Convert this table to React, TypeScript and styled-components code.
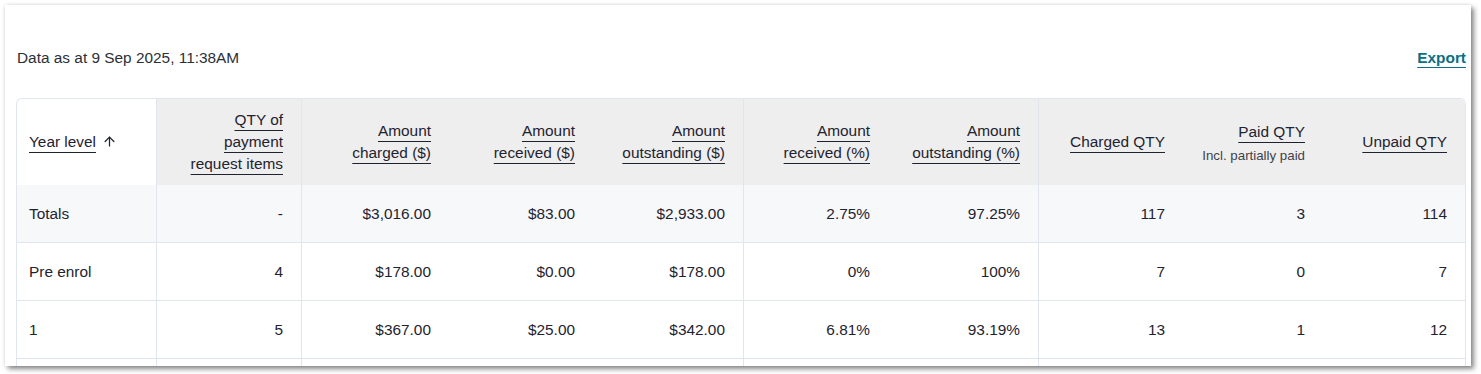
import React from 'react';
import styled, { createGlobalStyle } from 'styled-components';
import { ArrowUp } from 'lucide-react';

const GlobalStyle = createGlobalStyle`
  html, body {
    margin: 0;
    padding: 0;
    background: #ffffff;
    font-family: 'Liberation Sans', Arial, sans-serif;
    color: #1f2330;
  }
`;

const Page = styled.div`
  padding: 5px 10px 8px 5px;
  height: 374px;
  box-sizing: border-box;
`;

const Card = styled.div`
  width: 1466px;
  height: 361px;
  background: #ffffff;
  box-shadow: 3px 3px 5px rgba(0, 0, 0, 0.45), 0 0 4px rgba(0, 0, 0, 0.12);
  padding: 40px 5px 0 11px;
  box-sizing: border-box;
  overflow: hidden;
`;

const TopBar = styled.div`
  display: flex;
  justify-content: space-between;
  align-items: center;
  height: 26px;
  margin-bottom: 27px;
`;

const Stamp = styled.span`
  font-size: 15.4px;
  color: #2b2f38;
  padding-left: 1px;
`;

const ExportLink = styled.a`
  font-size: 15.4px;
  font-weight: 700;
  color: #0a6f86;
  text-decoration: underline;
  text-underline-offset: 4px;
  text-decoration-thickness: 1px;
  cursor: pointer;
`;

const Table = styled.table`
  width: 1450px;
  table-layout: fixed;
  border-collapse: separate;
  border-spacing: 0;
  border: 1px solid #e1e6ee;
  border-bottom: none;
  border-radius: 6px 6px 0 0;
  font-size: 15.4px;
`;

const HeadCell = styled.th<{ $light?: boolean; $divider?: boolean; $left?: boolean }>`
  height: 86px;
  padding: 0 18px 0 12px;
  text-align: ${p => (p.$left ? 'left' : 'right')};
  font-weight: 400;
  line-height: 22px;
  vertical-align: middle;
  background: ${p => (p.$light ? '#ffffff' : '#eeeeee')};
  border-left: ${p => (p.$divider ? '1px solid #e1e6ee' : 'none')};
  color: #1f2330;
  &:first-child {
    border-top-left-radius: 6px;
  }
  &:last-child {
    border-top-right-radius: 6px;
  }
`;

const SortLabel = styled.span`
  text-decoration: underline;
  text-underline-offset: 5px;
  text-decoration-thickness: 1px;
  text-decoration-color: #1f2330;
`;

const SortIcon = styled(ArrowUp)`
  vertical-align: -2px;
  margin-left: 6px;
`;

const SubNote = styled.div`
  font-size: 13.3px;
  line-height: 16px;
  color: #3f434c;
  margin-top: 5px;
`;

const Row = styled.tr<{ $total?: boolean }>`
  background: ${p => (p.$total ? '#f7f8fa' : '#ffffff')};
`;

const Cell = styled.td<{ $divider?: boolean; $left?: boolean; $first?: boolean }>`
  height: 57px;
  padding: 0 18px 0 12px;
  text-align: ${p => (p.$left ? 'left' : 'right')};
  border-left: ${p => (p.$divider ? '1px solid #e1e6ee' : 'none')};
  border-top: ${p => (p.$first ? 'none' : '1px solid #e1e6ee')};
  color: #1f2330;
  white-space: nowrap;
`;

const widths = [139, 145, 148, 144, 150, 145, 150, 145, 140, 142];
const dividers = [false, true, true, false, false, true, false, true, false, false];

const headers: React.ReactNode[] = [
  <>
    <SortLabel>Year level</SortLabel>
    <SortIcon size={15} strokeWidth={2} />
  </>,
  <SortLabel>
    QTY of
    <br />
    payment
    <br />
    request items
  </SortLabel>,
  <SortLabel>
    Amount
    <br />
    charged ($)
  </SortLabel>,
  <SortLabel>
    Amount
    <br />
    received ($)
  </SortLabel>,
  <SortLabel>
    Amount
    <br />
    outstanding ($)
  </SortLabel>,
  <SortLabel>
    Amount
    <br />
    received (%)
  </SortLabel>,
  <SortLabel>
    Amount
    <br />
    outstanding (%)
  </SortLabel>,
  <SortLabel>Charged QTY</SortLabel>,
  <>
    <SortLabel>Paid QTY</SortLabel>
    <SubNote>Incl. partially paid</SubNote>
  </>,
  <SortLabel>Unpaid QTY</SortLabel>,
];

// last row is only partly in view below the card's edge
const rows: string[][] = [
  ['Totals', '-', '$3,016.00', '$83.00', '$2,933.00', '2.75%', '97.25%', '117', '3', '114'],
  ['Pre enrol', '4', '$178.00', '$0.00', '$178.00', '0%', '100%', '7', '0', '7'],
  ['1', '5', '$367.00', '$25.00', '$342.00', '6.81%', '93.19%', '13', '1', '12'],
  ['', '', '', '', '', '', '', '', '', ''],
];

export default function App() {
  return (
    <>
      <GlobalStyle />
      <Page>
        <Card>
          <TopBar>
            <Stamp>Data as at 9 Sep 2025, 11:38AM</Stamp>
            <ExportLink>Export</ExportLink>
          </TopBar>
          <Table>
            <colgroup>
              {widths.map((w, i) => (
                <col key={i} style={{ width: w }} />
              ))}
            </colgroup>
            <thead>
              <tr>
                {headers.map((h, i) => (
                  <HeadCell key={i} $light={i === 0} $left={i === 0} $divider={dividers[i]}>
                    {h}
                  </HeadCell>
                ))}
              </tr>
            </thead>
            <tbody>
              {rows.map((r, ri) => (
                <Row key={ri} $total={ri === 0}>
                  {r.map((v, ci) => (
                    <Cell key={ci} $left={ci === 0} $divider={dividers[ci]} $first={ri === 0}>
                      {v}
                    </Cell>
                  ))}
                </Row>
              ))}
            </tbody>
          </Table>
        </Card>
      </Page>
    </>
  );
}
